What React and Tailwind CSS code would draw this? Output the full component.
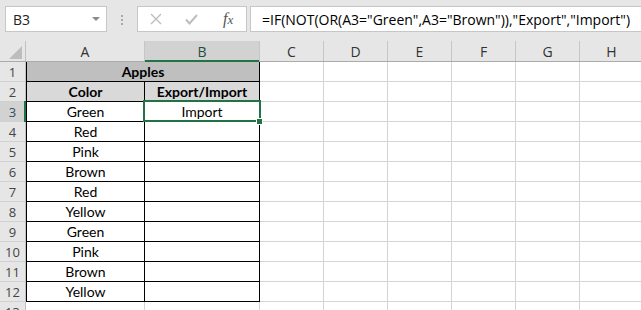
import React from 'react';
import clsx from 'clsx';

const colors = ['Green', 'Red', 'Pink', 'Brown', 'Red', 'Yellow', 'Green', 'Pink', 'Brown', 'Yellow'];
const extraCols = ['C', 'D', 'E', 'F', 'G', 'H'];

const cellFont = { fontFamily: 'Lato, "Liberation Sans", sans-serif' };

const RowHead = ({ num, active }) => (
  <div
    className={clsx(
      'relative flex h-full w-[26px] shrink-0 items-center justify-center border-b border-r border-b-[#d0d0d0] border-r-[#c0c0c0] pt-[1px] text-[13px] leading-[18px]',
      active ? 'bg-[#d2d2d2] text-[#2f4f5a]' : 'bg-[#e6e6e6] text-[#444]'
    )}
    style={{ fontFamily: '"Open Sans", sans-serif' }}
  >
    {num}
    {active && <div className="absolute right-[-1px] top-[-1px] h-[21px] w-[2px] bg-[#217346]" />}
  </div>
);

const Blank = () => (
  <>
    {extraCols.map((c) => (
      <div key={c} className="h-full w-[64px] shrink-0 border-b border-r border-[#d4d4d4]" />
    ))}
  </>
);

export default function App() {
  return (
    <div className="relative h-[310px] w-[641px] overflow-hidden bg-white">
      {/* formula bar */}
      <div className="flex h-[41px] items-start bg-[#e6e6e6] pt-[6px]">
        <div className="ml-[5px] flex h-[26px] w-[102px] shrink-0 items-center justify-between border border-[#c6c6c6] bg-white pl-[7px] pr-[6px]">
          <span className="text-[14px] text-[#222]" style={{ fontFamily: '"Open Sans", sans-serif' }}>B3</span>
          <svg width="8" height="4" viewBox="0 0 8 4"><path d="M0 0h8L4 4z" fill="#8a8a8a" /></svg>
        </div>
        <div className="ml-[14px] mt-[9px] flex w-[2px] shrink-0 flex-col gap-[2px]">
          <div className="h-[2px] w-[2px] bg-[#a8a8a8]" />
          <div className="h-[2px] w-[2px] bg-[#a8a8a8]" />
          <div className="h-[2px] w-[2px] bg-[#a8a8a8]" />
        </div>
        <div className="ml-[14px] flex h-[26px] w-[110px] shrink-0 items-center border border-[#c6c6c6] bg-white">
          <svg className="ml-[12px]" width="12" height="12" viewBox="0 0 12 12">
            <path d="M1 1L11 11M11 1L1 11" stroke="#bdbdbd" strokeWidth="1.4" />
          </svg>
          <svg className="ml-[23px]" width="13" height="11" viewBox="0 0 13 11">
            <path d="M1 5.5L4.5 9.5L12 1" stroke="#bdbdbd" strokeWidth="2" fill="none" />
          </svg>
          <span className="ml-[25px] italic text-[#555]" style={{ fontFamily: '"Liberation Serif", serif' }}>
            <span className="text-[16px]">f</span><span className="text-[13px]">x</span>
          </span>
        </div>
        <div className="ml-[3px] flex h-[26px] flex-1 items-center border border-r-0 border-[#c6c6c6] bg-white pl-[11px]">
          <span className="whitespace-nowrap text-[14px] text-black" style={{ fontFamily: '"Open Sans", sans-serif' }}>
            =IF(NOT(OR(A3="Green",A3="Brown")),"Export","Import")
          </span>
        </div>
      </div>

      {/* column headers */}
      <div
        className="flex h-[21px] border-b border-[#ababab] bg-[#e6e6e6] text-[14px] text-[#333]"
        style={{ fontFamily: '"Open Sans", sans-serif' }}
      >
        <div className="flex w-[26px] shrink-0 items-end justify-end border-r border-[#c0c0c0] pb-[2px] pr-[3px]">
          <svg width="13" height="13" viewBox="0 0 13 13"><path d="M13 0V13H0z" fill="#bdbdbd" /></svg>
        </div>
        <div className="flex w-[119px] shrink-0 items-center justify-center border-r border-[#c6c6c6]">A</div>
        <div className="relative flex w-[115px] shrink-0 items-center justify-center border-r border-[#c6c6c6] bg-[#d2d2d2] text-[#1f4f3a]">
          B
          <div className="absolute bottom-[-1px] left-0 h-[2px] w-full bg-[#217346]" />
        </div>
        {extraCols.map((c) => (
          <div key={c} className="flex w-[64px] shrink-0 items-center justify-center border-r border-[#c6c6c6]">{c}</div>
        ))}
      </div>

      {/* rows */}
      <div className="flex flex-col text-[14px] leading-[16px] text-black" style={cellFont}>
        <div className="flex h-[20px]">
          <RowHead num={1} />
          <div className="flex h-full w-[234px] shrink-0 items-end justify-center border-b border-l border-r border-black bg-[#bfbfbf] pb-[1px] font-bold">
            Apples
          </div>
          <Blank />
        </div>
        <div className="flex h-[20px]">
          <RowHead num={2} />
          <div className="flex h-full w-[119px] shrink-0 items-end justify-center border-b border-l border-r border-black bg-[#d9d9d9] pb-[1px] font-bold">
            Color
          </div>
          <div className="flex h-full w-[115px] shrink-0 items-end justify-center border-b border-r border-black bg-[#d9d9d9] pb-[1px] font-bold">
            Export/Import
          </div>
          <Blank />
        </div>
        {colors.map((c, i) => (
          <div key={i} className="flex h-[20px]">
            <RowHead num={i + 3} active={i === 0} />
            <div className="flex h-full w-[119px] shrink-0 items-end justify-center border-b border-l border-r border-black pb-[1px]">
              {c}
            </div>
            <div className="flex h-full w-[115px] shrink-0 items-end justify-center border-b border-r border-black pb-[1px]">
              {i === 0 ? 'Import' : ''}
            </div>
            <Blank />
          </div>
        ))}
        <div className="flex h-[20px]">
          <RowHead num={13} />
          <div className="h-full w-[119px] shrink-0 border-b border-r border-[#d4d4d4]" />
          <div className="h-full w-[115px] shrink-0 border-b border-r border-[#d4d4d4]" />
          <Blank />
        </div>
      </div>

      {/* active cell B3 */}
      <div className="absolute left-[143px] top-[100px] h-[22px] w-[118px] border-2 border-[#217346]" />
      <div className="absolute left-[256px] top-[118px] h-[7px] w-[7px] border border-white bg-[#217346]" />
    </div>
  );
}
